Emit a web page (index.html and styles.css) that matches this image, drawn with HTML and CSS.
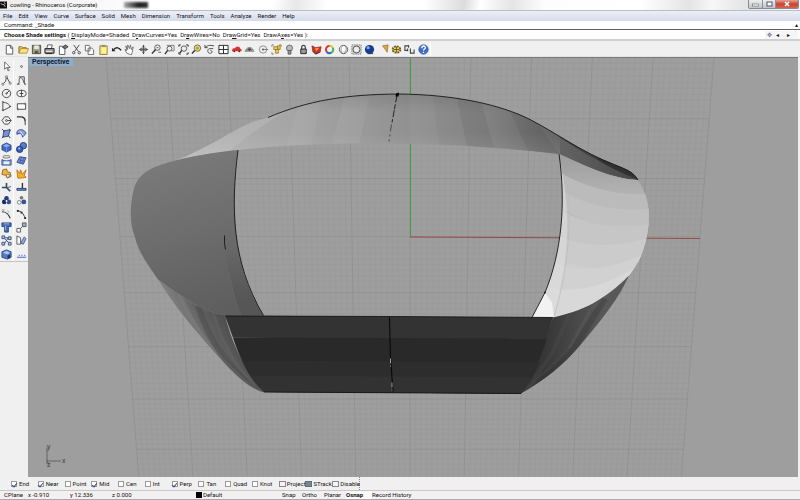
FILE: index.html
```html
<!DOCTYPE html>
<html lang="en">
<head>
<meta charset="utf-8">
<title>cowling - Rhinoceros (Corporate)</title>
<link rel="stylesheet" href="styles.css">
</head>
<body>
<header class="titlebar">
  <svg class="app-icon" viewBox="0 0 8 8"><rect width="8" height="8" fill="#111"/><path d="M1 2l2 2 1-1 2 3M5 1l1 2" stroke="#ddd" fill="none"/></svg>
  <span class="title">cowling - Rhinoceros (Corporate)</span>
  <span class="glass-shadow"></span>
  <div class="window-buttons">
    <button aria-label="Minimize"><svg viewBox="0 0 12 8"><rect x="3" y="4" width="6" height="2" fill="#fff" stroke="#666" stroke-width=".6"/></svg></button>
    <button aria-label="Restore"><svg viewBox="0 0 12 8"><rect x="4" y="2" width="5" height="4" fill="#fff" stroke="#556" stroke-width="1"/></svg></button>
    <button class="close" aria-label="Close"><svg viewBox="0 0 22 8"><path d="M9 2l4 4M13 2l-4 4" stroke="#fff" stroke-width="1.5"/></svg></button>
  </div>
</header>
<nav class="menubar">
  <a href="#">File</a><a href="#">Edit</a><a href="#">View</a><a href="#">Curve</a><a href="#">Surface</a><a href="#">Solid</a><a href="#">Mesh</a><a href="#">Dimension</a><a href="#">Transform</a><a href="#">Tools</a><a href="#">Analyze</a><a href="#">Render</a><a href="#">Help</a>
</nav>
<section class="history"><span>Command: _Shade</span><span class="spin">▴</span></section>
<section class="prompt">
  <p><b>Choose Shade settings</b> ( <a href="#"><u>D</u>isplayMode=<i>Shaded</i></a>&nbsp; <a href="#">D<u>r</u>awCurves=<i>Yes</i></a>&nbsp; <a href="#">Dr<u>a</u>wWires=<i>No</i></a>&nbsp; <a href="#">Dra<u>w</u>Grid=<i>Yes</i></a>&nbsp; <a href="#">DrawA<u>x</u>es=<i>Yes</i></a> ):</p>
  <div class="scroll"><span class="grip">✥</span><span>◂</span><span>▸</span></div>
</section>
<div class="toolbar">
  <div class="tools">
    <button aria-label="New"><svg viewBox="0 0 12 12"><path d="M2.5 1.500h5l2 2.500v7h-7zM7 1.500v3h2.500" fill="#fff" stroke="#555"/></svg></button>
    <button aria-label="Open"><svg viewBox="0 0 12 12"><path d="M1 10V3h3l1 1h4v2" fill="#f5d264" stroke="#8a6a20"/><path d="M1 10l2-5h8.500l-2 5z" fill="#ffe27a" stroke="#9a7420" stroke-width=".8"/></svg></button>
    <button aria-label="Save"><svg viewBox="0 0 12 12"><path d="M1.500 1.500h9v9h-9z" fill="#a8a47c" stroke="#444"/><path d="M3.500 1.500h5v4h-5z" fill="#e8e8e0"/><path d="M4 7.500h4v3H4z" fill="#555"/></svg></button>
    <button aria-label="Print"><svg viewBox="0 0 12 12"><path d="M4 1h5l-1 4H3z" fill="#fff" stroke="#555"/><path d="M1 5h10v5H1z" fill="#999" stroke="#222"/><path d="M2 8h7" stroke="#fff"/><path d="M2 10.500h7" stroke="#222"/></svg></button>
    <button aria-label="Properties"><svg viewBox="0 0 12 12"><path d="M1.500 2.500h6v9h-6z" fill="#fff" stroke="#555"/><path d="M5 4l3-3 3 2-3 2z" fill="#777" stroke="#333"/></svg></button>
    <button aria-label="Cut"><svg viewBox="0 0 12 12" fill="none" stroke="#444"><path d="M3 1l5 7M9 1L4 8"/><circle cx="3" cy="9.500" r="1.300"/><circle cx="9" cy="9.500" r="1.300"/></svg></button>
    <button aria-label="Copy"><svg viewBox="0 0 12 12" fill="#fff" stroke="#666"><path d="M1.500 1.500h4l1 1v5h-5zM4.500 4.500h4l2 2v5h-6z"/></svg></button>
    <button aria-label="Paste"><svg viewBox="0 0 12 12"><path d="M2 2h8v9.500H2z" fill="#f2df70" stroke="#91813a"/><path d="M4 1h4v2H4z" fill="#888"/><path d="M4 4h5v6H4z" fill="#fff490"/></svg></button>
    <button aria-label="Undo"><svg viewBox="0 0 12 12"><path d="M3 6c3-3 6-2 8 1" fill="none" stroke="#222" stroke-width="1.600"/><path d="M1 4v4h4z" fill="#222"/></svg></button>
    <button aria-label="Pan"><svg viewBox="0 0 12 12"><path d="M3 10L1 6l2 1-1-5 2 4 0-5 2 4 1-4 1 5 2-3-1 6-1 3z" fill="#fff" stroke="#555" stroke-width=".8"/></svg></button>
    <button aria-label="Rotate view"><svg viewBox="0 0 12 12"><path d="M6 1v10M1 6h10" stroke="#555"/><ellipse cx="6" cy="6" rx="4" ry="1.600" fill="none" stroke="#555"/><path d="M4.500 3L6 1l1.500 2M4.500 9L6 11l1.500-2" fill="#444"/></svg></button>
    <button aria-label="Zoom dynamic"><svg viewBox="0 0 12 12"><circle cx="7" cy="4" r="3" fill="#eee" stroke="#555"/><path d="M5 6l-4 4.500" stroke="#333" stroke-width="1.600"/><path d="M6 4h2M8 9h3" stroke="#555"/></svg></button>
    <button aria-label="Zoom window"><svg viewBox="0 0 12 12"><path d="M3 1.500h8v6H8" fill="none" stroke="#777"/><circle cx="6" cy="5" r="2.700" fill="#eee" stroke="#555"/><path d="M4 7l-3 4" stroke="#333" stroke-width="1.500"/></svg></button>
    <button aria-label="Zoom extents"><svg viewBox="0 0 12 12"><path d="M1 3V1h2M9 1h2v2M1 9v2h2M9 11h2V9" fill="none" stroke="#222"/><circle cx="6.500" cy="5" r="3" fill="#eee" stroke="#555"/><path d="M4 7l-2 3" stroke="#333" stroke-width="1.500"/></svg></button>
    <button aria-label="Zoom selected"><svg viewBox="0 0 12 12"><circle cx="7" cy="4.500" r="3.500" fill="#e7dc62" stroke="#666"/><circle cx="7" cy="4.500" r="1.500" fill="#a59b4a"/><path d="M4 7l-3 3.500" stroke="#333" stroke-width="1.600"/></svg></button>
    <button aria-label="Undo view"><svg viewBox="0 0 12 12" fill="none" stroke="#444"><path d="M1 1v3h3M1 4c4-4 7-2 10-2M10 5H6c-3 1-2 5 0 5 3 1 4-3 1-3"/></svg></button>
    <button aria-label="Four viewports"><svg viewBox="0 0 12 12"><path d="M1 1.500h10v9H1zM6 1.500v9M1 6h10" fill="#fff" stroke="#222"/></svg></button>
    <button aria-label="Set view"><svg viewBox="0 0 12 12"><path d="M1 7l1-2 2-.500 2-1.500h3l1 2 1.500 1v2H1z" fill="#d93030"/><circle cx="3.500" cy="8" r="1" fill="#333"/><circle cx="9" cy="8" r="1" fill="#333"/></svg></button>
    <button aria-label="Set plane"><svg viewBox="0 0 12 12"><path d="M1 8l3-4h4l3 4zM3 8l3-4M6 4l3 4M2 6h8" fill="#bbb" stroke="#777" stroke-width=".8"/><circle cx="6" cy="6" r="1.500" fill="#444"/></svg></button>
    <button aria-label="Circle snap"><svg viewBox="0 0 12 12"><circle cx="5.500" cy="6" r="4" fill="none" stroke="#888"/><circle cx="5.500" cy="6" r="1" fill="#333"/><path d="M5.500 6H11" stroke="#777"/></svg></button>
    <button aria-label="Select"><svg viewBox="0 0 12 12"><path d="M3 1H1v2M9 1h2v2M1 9v2h2" fill="none" stroke="#777"/><path d="M3 3h4v3H3zM7 2h3v4H8zM5 6h3v4H5z" fill="#f4d650" stroke="#9a812c"/></svg></button>
    <button aria-label="Hide"><svg viewBox="0 0 12 12"><circle cx="6" cy="4.500" r="3.300" fill="#bbb" stroke="#666"/><path d="M4.500 7h3v4h-3z" fill="#999" stroke="#555"/></svg></button>
    <button aria-label="Lock"><svg viewBox="0 0 12 12"><path d="M4 6V3.500a2 2 0 014 0V6" fill="none" stroke="#444" stroke-width="1.300"/><path d="M3 5.500h6v5H3z" fill="#999" stroke="#222"/></svg></button>
    <button aria-label="Layers"><svg viewBox="0 0 12 12"><path d="M1 2l4 2 6-1-1 6-5 2-3-3z" fill="#d72e20" stroke="#7e211b" stroke-width=".7"/><path d="M4 5l5-1-3 4z" fill="#f1a23f"/><path d="M2 8l3 3 4-2" stroke="#253b68" fill="none"/></svg></button>
    <button aria-label="Color"><svg viewBox="0 0 12 12" fill="none" stroke-width="2.200"><path d="M6 2a4 4 0 013.500 2" stroke="#e8c42c"/><path d="M9.500 4a4 4 0 01-1.500 5.500" stroke="#4ab34b"/><path d="M8 9.500a4 4 0 01-5-1" stroke="#2868ce"/><path d="M3 8.500A4 4 0 016 2" stroke="#d33939"/></svg></button>
    <button aria-label="Shade"><svg viewBox="0 0 12 12"><circle cx="6" cy="6" r="4.500" fill="#eee" stroke="#555"/><circle cx="5" cy="5" r="2.500" fill="#fff"/><path d="M4 10c-1-4-1-6 1-8M6 10c3-2 4-5 2-8" fill="none" stroke="#888" stroke-width=".8"/></svg></button>
    <button aria-label="Shade selected"><svg viewBox="0 0 12 12"><path d="M1 1h10v10H1z" fill="#ddd" stroke="#555" stroke-dasharray="1 1"/><circle cx="6" cy="6" r="3.800" fill="#eee" stroke="#444"/></svg></button>
    <button aria-label="Render"><svg viewBox="0 0 12 12"><circle cx="6" cy="6" r="5" fill="#163d92"/><circle cx="4.500" cy="4" r="1.800" fill="#77a9ed"/><path d="M4 10.500h6" stroke="#334"/></svg></button>
    <button aria-label="Spotlight"><svg viewBox="0 0 12 12"><path d="M5 2l6-1-1 8-2-3z" fill="#e2a640" stroke="#86652b" stroke-width=".7"/></svg></button>
    <button aria-label="Options"><svg viewBox="0 0 12 12"><ellipse cx="6" cy="6" rx="4.200" ry="3.500" fill="#eed65a" stroke="#665320" stroke-width="2" stroke-dasharray="2 1"/><path d="M3 6h6M6 3v6" stroke="#665320"/></svg></button>
    <button aria-label="Dimension"><svg viewBox="0 0 12 12"><path d="M5 2H1v5h3M5 1v3M4 5v3M7 5v5h4V6" fill="none" stroke="#444" stroke-width="1.200"/></svg></button>
    <button aria-label="Help"><svg viewBox="0 0 12 12"><circle cx="6" cy="6" r="5.200" fill="#426bc5" stroke="#27479b" stroke-width=".6"/><path d="M4 4.500c0-3 4-3 4-.500 0 1.500-2 1.500-2 3M6 8.500v1.300" fill="none" stroke="#fff" stroke-width="1.400"/></svg></button>
  </div>
</div>
<main class="workspace">
  <aside class="sidebar">
    <div class="palette">
      <button aria-label="Select"><svg viewBox="0 0 12 12"><path d="M4 1v8l2-2 2 4 1-1-2-3h3z" fill="#fff" stroke="#444" stroke-width=".8"/></svg></button>
      <button aria-label="Point"><svg viewBox="0 0 12 12"><circle cx="6" cy="6" r="1" fill="#fff" stroke="#555"/></svg></button>
      <button aria-label="Polyline"><svg viewBox="0 0 12 12" fill="#fff" stroke="#444"><path d="M2 10l3-3 1-5 4 7" fill="none"/><path d="M1 9h2v2H1zM5 1h2v2H5zM9 8h2v2H9z" stroke-width=".6"/></svg></button>
      <button aria-label="Curve"><svg viewBox="0 0 12 12" fill="none" stroke="#444"><path d="M2 10c3-1 0-7 3-7s3 6 5 7"/><path d="M3 2h6v7M1 10h3M9 10h2"/></svg></button>
      <button aria-label="Circle"><svg viewBox="0 0 12 12" fill="none" stroke="#444"><circle cx="6" cy="6" r="4.500"/><circle cx="6" cy="6" r=".7"/><path d="M6 6l3-3"/></svg></button>
      <button aria-label="Ellipse"><svg viewBox="0 0 12 12" fill="none" stroke="#444"><ellipse cx="6" cy="6" rx="5" ry="3.500"/><path d="M6 2v7M4 6h4"/></svg></button>
      <button aria-label="Arc"><svg viewBox="0 0 12 12" fill="none" stroke="#444"><path d="M2 1.500c5 0 8 3 8 5L2 10.500zM1 1h2M9 6h2M1 10h2"/></svg></button>
      <button aria-label="Rectangle"><svg viewBox="0 0 12 12"><path d="M1.500 3h9v6h-9z" fill="#fff" stroke="#444"/><path d="M1 8h2v2H1zM9 2h2v2H9z" fill="#777"/></svg></button>
      <button aria-label="Polygon"><svg viewBox="0 0 12 12" fill="none" stroke="#444"><path d="M4 2h4l3 4-3 4H4L1 6z"/><circle cx="6" cy="6" r="1"/><path d="M7 6h4"/></svg></button>
      <button aria-label="Fillet"><svg viewBox="0 0 12 12" fill="none" stroke="#333"><path d="M1 2h4M5 2c4 0 5 2 5 5" stroke-width="1.500"/><path d="M10 7v4"/></svg></button>
      <button aria-label="Surface"><svg viewBox="0 0 12 12"><path d="M3 3l7-1-2 7-6 1z" fill="#7891ce" stroke="#334d8c"/><path d="M1 1l3 3M9 1l1 2M1 11l2-2M8 8l2 3" stroke="#334"/></svg></button>
      <button aria-label="Sweep"><svg viewBox="0 0 12 12"><path d="M1 4c3-4 9-2 10 2L7 10c0-4-3-5-6-3z" fill="#8ba1d7" stroke="#334d8c"/><path d="M4 3l4 5" stroke="#eef"/></svg></button>
      <button aria-label="Box"><svg viewBox="0 0 12 12"><path d="M1 3.500L6 1l5 2.500v5L6 11l-5-2.500z" fill="#3f66c4" stroke="#203a7d" stroke-width=".8"/><path d="M2 4l4-2 4 2-4 2z" fill="#8eaae8"/><path d="M6 6v5" stroke="#7895d4"/></svg></button>
      <button aria-label="Union"><svg viewBox="0 0 12 12"><circle cx="8" cy="4" r="3.500" fill="#5c7bca" stroke="#213b7c"/><circle cx="4" cy="8" r="3.500" fill="#395eb4" stroke="#213b7c"/><circle cx="3.500" cy="7" r="1" fill="#c5d6ff"/></svg></button>
      <button aria-label="Project"><svg viewBox="0 0 12 12"><ellipse cx="6" cy="2" rx="4" ry="1.300" fill="#fff" stroke="#666"/><path d="M1 5c3 2 7 2 10 0v6H1z" fill="#8da4da" stroke="#344f91"/><path d="M3 7h6v3H3z" fill="#e9f0ff"/></svg></button>
      <button aria-label="Mesh"><svg viewBox="0 0 12 12"><path d="M1 8l3-6 7 1-3 7z" fill="#7893d7" stroke="#334d8c"/><path d="M3 5l6 2M6 2L4 9M9 3L6 9" stroke="#334d8c" stroke-width=".7"/></svg></button>
      <button aria-label="Join"><svg viewBox="0 0 12 12"><path d="M2 2l4-1 1 3 3 1 1 4-4 2-2-3-4-1z" fill="#f1b33d" stroke="#98671c"/><path d="M6 7h3v3H6z" fill="#fff2c4" stroke="#555" stroke-width=".6"/></svg></button>
      <button aria-label="Explode"><svg viewBox="0 0 12 12"><path d="M1 2l3 4 1-4 2 5 4-5-2 6 2 2-5 1H2z" fill="#f4b31f" stroke="#bd711b"/></svg></button>
      <button aria-label="Trim"><svg viewBox="0 0 12 12" fill="none"><path d="M6 1v6M1 6h5l4 4" stroke="#334b73" stroke-width="1.800"/><path d="M7 6l4-1" stroke="#555"/></svg></button>
      <button aria-label="Split"><svg viewBox="0 0 12 12"><path d="M7 1v6" stroke="#333" stroke-width="1.500"/><path d="M1 7h10v2H1z" fill="#7891ce" stroke="#233f70"/></svg></button>
      <button aria-label="Group"><svg viewBox="0 0 12 12"><circle cx="6" cy="3.500" r="2.500" fill="#283b72"/><circle cx="3.500" cy="7.500" r="2.500" fill="#192b5c"/><circle cx="8.500" cy="7.500" r="2.500" fill="#344d91"/><circle cx="6" cy="6.500" r="1" fill="#fff"/></svg></button>
      <button aria-label="Ungroup"><svg viewBox="0 0 12 12"><circle cx="6" cy="3" r="2" fill="#777"/><circle cx="3.500" cy="8" r="2" fill="#fff" stroke="#777"/><circle cx="8.500" cy="7.500" r="2.700" fill="#3652a0"/></svg></button>
      <button aria-label="Edit curve"><svg viewBox="0 0 12 12"><path d="M1 3c5 0 7 2 9 7" fill="none" stroke="#333" stroke-width="1.300"/><path d="M1 1h3M7 2l2 2" stroke="#888"/></svg></button>
      <button aria-label="Edit points"><svg viewBox="0 0 12 12"><path d="M1 2c5 0 7 3 9 8" fill="none" stroke="#333"/><path d="M1 1h2v2H1zM5 3h2v2H5zM9 9h2v2H9z" fill="#222"/></svg></button>
      <button aria-label="Text"><svg viewBox="0 0 12 12"><path d="M1 1h10v4H8v6H4V5H1z" fill="#426bb7" stroke="#294777"/><path d="M3 2h6M5 4v5" stroke="#9db9ec"/></svg></button>
      <button aria-label="Move"><svg viewBox="0 0 12 12" stroke="#555"><path d="M3 9l6-6" stroke-dasharray="2 1"/><path d="M1 7h4v4H1z" fill="#fff"/><path d="M7 1h4v4H7z" fill="#9baed8"/></svg></button>
      <button aria-label="Array"><svg viewBox="0 0 12 12" stroke="#38507c" fill="#b9c7e2"><path d="M4 4l4 4M8 3L4 9M4 3h4"/><path d="M1 1h3v3H1zM8 2h3v3H8zM1 8h3v3H1zM8 8h3v3H8z"/></svg></button>
      <button aria-label="Orient"><svg viewBox="0 0 12 12"><path d="M1 1l4 2v7H1z" fill="#fff" stroke="#555"/><path d="M5 9l4-7 2 2-3 6z" fill="#91a8d8" stroke="#476090"/></svg></button>
      <button aria-label="Solid tools"><svg viewBox="0 0 12 12"><path d="M1 3l5-2 5 2v6l-4 2-6-2z" fill="#547bc8" stroke="#28498b"/><path d="M2 4l4-2 4 2-3 2z" fill="#abc6f5"/><path d="M7 7l3-1v4H7z" fill="#26355d"/></svg></button>
      <button aria-label="Flatten"><svg viewBox="0 0 12 12"><path d="M1 9l2-3h7l1 3z" fill="#e4edff"/><path d="M1 9h10M3 7h1M6 7h1M9 7h1" stroke="#476dac" stroke-width="1.300"/></svg></button>
    </div>
  </aside>
  <section class="viewport">
    <h1 class="view-name">Perspective</h1>
    <svg class="scene" viewBox="28 57 770 420" preserveAspectRatio="xMidYMid slice">
      <defs>
        <linearGradient id="gTop" x1="0" x2="1" y1="0" y2="0"><stop offset="0" stop-color="#b4b4b4"/><stop offset=".28" stop-color="#a4a4a4"/><stop offset=".5" stop-color="#929292"/><stop offset=".68" stop-color="#828282"/><stop offset=".84" stop-color="#626262"/><stop offset="1" stop-color="#484848"/></linearGradient>
        <linearGradient id="gLow" x1="0" x2="0" y1="0" y2="1"><stop offset="0" stop-color="#fff" stop-opacity="0"/><stop offset="1" stop-color="#fff" stop-opacity=".13"/></linearGradient>
        <linearGradient id="gRim" x1="0" x2="0" y1="0" y2="1"><stop offset="0" stop-color="#000" stop-opacity=".12"/><stop offset="1" stop-color="#000" stop-opacity="0"/></linearGradient>
        <linearGradient id="gLeft" x1=".3" x2=".55" y1="0" y2="1"><stop offset="0" stop-color="#7b7b7b"/><stop offset=".5" stop-color="#6d6d6d"/><stop offset="1" stop-color="#5e5e5e"/></linearGradient>
        <linearGradient id="gFold" gradientUnits="userSpaceOnUse" x1="0" x2="0" y1="248" y2="305"><stop offset="0" stop-color="#505050" stop-opacity="0"/><stop offset="1" stop-color="#505050" stop-opacity=".6"/></linearGradient>
        <linearGradient id="gLeftLow" gradientUnits="userSpaceOnUse" x1="190" y1="345" x2="232" y2="322"><stop offset="0" stop-color="#878787"/><stop offset=".5" stop-color="#616161"/><stop offset="1" stop-color="#4a4a4a"/></linearGradient>
        <linearGradient id="gRight" x1="0" x2="0" y1="0" y2="1"><stop offset="0" stop-color="#9c9c9c"/><stop offset=".3" stop-color="#b8b8b8"/><stop offset=".6" stop-color="#c9c9c9"/><stop offset="1" stop-color="#dedede"/></linearGradient>
        <linearGradient id="gRightLow" gradientUnits="userSpaceOnUse" x1="545" y1="335" x2="600" y2="340"><stop offset="0" stop-color="#363636"/><stop offset="1" stop-color="#585858"/></linearGradient>
        <clipPath id="cTop"><path d="M168 163C190 155 211 144 235 130C247 123 256 120 268 117C308 100 345 94 398 93.500C455 94 500 104 530 119C555 132 574 146 600 158C622 168 632 169 638 179.500C610 178 583 164 559 153.500C510 148 460 144 410 143.500C350 142.500 300 143 238 149.500C212 152 190 156 168 163Z"/></clipPath>
        <clipPath id="cRight"><path d="M559 153.500C583 164 610 178 638 179.500C651 199 652 222 643 250C640 260 634 268 629 275C603 301 583 310 553 317H532L545 292C562 251 566 202 559 153.500Z"/></clipPath>
        <clipPath id="cLeftLow"><path d="M158 279C180 295 200 310 225 315C232 345 247 373 264 392C244 386 225 364 200 335C183 315 174 304 158 279Z"/></clipPath>
        <clipPath id="cRightLow"><path d="M553 317C583 310 603 301 629 275C619 298 601 320 580 345C562 366 545 379 521 393C533 370 543 345 553 317Z"/></clipPath>
      </defs>
      <rect x="28" y="57" width="770" height="420" fill="#9e9e9e"/>
      <path id="grid-minor" class="grid-minor"/>
      <path id="grid-major" class="grid-major"/>
      <path d="M410.500 57V236.500" stroke="#3f9d43"/>
      <path d="M410 236.500L700 238" stroke="#934a48" stroke-width="1.100"/>

      <path d="M168 163C190 155 211 144 235 130C247 123 256 120 268 117C308 100 345 94 398 93.500C455 94 500 104 530 119C555 132 574 146 600 158C622 168 632 169 638 179.500C610 178 583 164 559 153.500C510 148 460 144 410 143.500C350 142.500 300 143 238 149.500C212 152 190 156 168 163Z" fill="url(#gTop)"/>
      <g clip-path="url(#cTop)">
        <path d="M180 160C230 130 260 116 275 112L292 107C265 122 235 145 225 155Z" fill="#bcbcbc" opacity=".45"/>
        <path d="M300 100L285 150H310L322 98ZM345 94L330 150H358L370 93Z" fill="#fff" opacity=".05"/>
        <path d="M410 90V150H440L432 90Z" fill="#fff" opacity=".04"/>
        <path d="M455 90L468 150H495L478 90ZM505 100L530 155H560L525 105Z" fill="#000" opacity=".06"/>
        <path d="M280 90H540V112H280Z" fill="url(#gRim)"/>
        <path d="M160 132H560V160H160Z" fill="url(#gLow)"/>
        <path d="M540 122C575 150 605 164 640 181L637 170L600 156Z" fill="#303030" opacity=".55"/>
        <path d="M596 158C610 168 622 172 640 179L630 170L600 158Z" fill="#292929" opacity=".6"/>
      </g>

      <path d="M238 149.500C212 152 190 156 168 162C147 168 138 175 134 188C130 204 129 222 135 237C139 253 148 264 158 279C180 295 200 310 225 315H263.500C244 285 235 247 234.500 205C234.500 180 236 165 238 149.500Z" fill="url(#gLeft)"/>
      <path d="M225 248C228 276 233 296 240 315H263.500C248 289 240 267 237 242Z" fill="url(#gFold)"/>
      <path d="M229 272C233 292 236 303 241 315" fill="none" stroke="#747474" opacity=".5"/>
      <path d="M158 279C180 295 200 310 225 315C232 345 247 373 264 392C244 386 225 364 200 335C183 315 174 304 158 279Z" fill="url(#gLeftLow)"/>
      <g clip-path="url(#cLeftLow)" fill="none">
        <path d="M178 291C196 335 225 366 255 389" stroke="#858585" stroke-width="4" opacity=".4"/>
        <path d="M198 305C210 343 230 370 258 390" stroke="#464646" stroke-width="6" opacity=".4"/>
        <path d="M213 311C222 345 237 368 262 392" stroke="#666" stroke-width="3" opacity=".4"/>
      </g>

      <path d="M559 153.500C583 164 610 178 638 179.500C651 199 652 222 643 250C640 260 634 268 629 275C603 301 583 310 553 317H532L545 292C562 251 566 202 559 153.500Z" fill="url(#gRight)"/>
      <g clip-path="url(#cRight)">
        <path d="M560 172C588 188 620 196 652 193V215C620 212 585 212 562 190Z" fill="#bbb"/>
        <path d="M562 190C588 207 620 211 652 208V227C620 229 588 227 562 207Z" fill="#c1c1c1"/>
        <path d="M562 210C588 226 620 229 652 223V242C620 249 586 247 561 231Z" fill="#c6c6c6"/>
        <path d="M561 236C588 248 620 246 652 236V258C620 270 582 272 556 255Z" fill="#cbcbcb"/>
        <path d="M556 263C588 275 620 265 652 250V280L540 320Z" fill="#d1d1d1"/>
        <path d="M551 288C585 293 612 282 640 264V290L540 322Z" fill="#d8d8d8"/>
        <path d="M561 165C571 212 569 260 553 317H530L546 290C561 252 566 207 559 155Z" fill="#dedede" opacity=".6"/>
        <path d="M545 292L552 302L554 317H530Z" fill="#f2f2f2"/>
        <path d="M568 180C571 231 568 270 554 316" fill="none" stroke="#bcbcbc" opacity=".7"/>
      </g>
      <path d="M553 317C583 310 603 301 629 275C619 298 601 320 580 345C562 366 545 379 521 393C533 370 543 345 553 317Z" fill="url(#gRightLow)"/>
      <g clip-path="url(#cRightLow)" fill="none">
        <path d="M628 276L590 310L568 350L523 392" stroke="#686868" stroke-width="3" opacity=".25"/>
        <path d="M605 298L574 348L525 392" stroke="#333" stroke-width="6" opacity=".3"/>
        <path d="M570 312L552 353L527 389" stroke="#555" stroke-width="4" opacity=".25"/>
      </g>

      <path d="M225 315L553 317L545 341L233 337Z" fill="#333"/>
      <path d="M233 337L547 338C541 357 533 373 521 393L264 391.500C248 376 239 356 233 337Z" fill="#292929"/>
      <path d="M242 360L540 362C534 374 529 382 521 393L264 391.500C254 382 248 373 242 360Z" fill="#2d2d2d"/>
      <path d="M251 375L533 377L521 393L264 391.500Z" fill="#323232"/>

      <g fill="none" stroke="#161616" stroke-width=".9">
        <path d="M268 117C308 100 345 94 398 93.500C455 94 500 104 530 119C555 132 574 146 600 158C622 168 632 169 638 179.500"/>
        <path d="M238 149.500C231 206 231 260 263.500 315"/>
        <path d="M559 153.500C566 202 562 251 545 292L532 317"/>
        <path d="M225 315.500L390 316L553 317M264 391.500L521 393"/>
        <path d="M397 95L392 122" stroke-dasharray="7 2 5 1"/>
        <path d="M391.500 124L389 141" stroke="#444" stroke-dasharray="7 3 2 3"/>
        <path d="M224.500 235V243L225.500 249"/>
        <path d="M389.500 317L390.500 357L393 391" stroke="#080808" stroke-width="1.100"/>
        <path d="M390.500 358V366M392 382V390" stroke="#aaa" stroke-dasharray="5 2"/>
      </g>
      <path d="M396 93L399 92L398.500 96L395.500 96Z" fill="#000"/>
      <circle cx="545" cy="292" r="1" fill="#222"/>
      <path d="M47 464V447M47 460.500H61M47 460L49 464" fill="none" stroke="#555" stroke-width=".8"/>
      <g class="axis-labels"><text x="47" y="448">y</text><text x="62" y="462">x</text><text x="47" y="466">z</text></g>
    </svg>
  </section>
</main>
<section class="osnap">
  <label><input type="checkbox" checked>End</label>
  <label><input type="checkbox" checked>Near</label>
  <label><input type="checkbox">Point</label>
  <label><input type="checkbox" checked>Mid</label>
  <label><input type="checkbox">Cen</label>
  <label><input type="checkbox">Int</label>
  <label><input type="checkbox" checked>Perp</label>
  <label><input type="checkbox">Tan</label>
  <label><input type="checkbox">Quad</label>
  <label><input type="checkbox">Knot</label>
  <label class="tight"><input class="push" type="checkbox">Project</label>
  <label class="tight"><input class="push" type="checkbox" checked>STrack</label>
  <label class="tight"><input class="push" type="checkbox">Disable</label>
</section>
<footer class="status">
  <span>CPlane</span><span>x -0.910</span><span>y 12.336</span><span>z 0.000</span>
  <span class="layer"><i class="swatch"></i>Default</span>
  <button>Snap</button><button>Ortho</button><button>Planar</button><button class="on">Osnap</button><button>Record History</button>
</footer>
<script src="grid.js"></script>
</body>
</html>
```
FILE: styles.css
```css
* { box-sizing: border-box; }
body {
  margin: 0;
  height: 100vh;
  display: flex;
  flex-direction: column;
  overflow: hidden;
  background: #f0f0f0;
  color: #111;
  font: 6px/8px Roboto, "Liberation Sans", sans-serif;
}
button {
  margin: 0;
  padding: 0;
  border: 0;
  background: none;
  color: inherit;
  font: inherit;
}
a { color: inherit; text-decoration: none; }
svg { display: block; }

.titlebar {
  flex: 0 0 11px;
  display: flex;
  align-items: center;
  gap: 3px;
  padding-right: 1px;
  border-bottom: 1px solid #bcbcc4;
  background: linear-gradient(100deg, #ececec 0, #f8f8f8 12%, #fff 20%, #fff 34%, #e8e8e8 37%, #fff 41%, #fff 53%, #dcdcdc 58%, #fff 60%, #e4e4e4 64%, #fdfdfd 68%, #fff 80%, #e4e4e4 86%, #f7f7f7 89%, #e4e4e4 93%, #fafafa 100%);
}
.app-icon { width: 7px; height: 8px; }
.glass-shadow {
  width: 24px;
  height: 6px;
  margin-left: 24px;
  background: linear-gradient(90deg, #aaa, #222 60%, #333);
  filter: blur(1px);
}
.window-buttons {
  display: flex;
  align-self: flex-start;
  margin-left: auto;
  border: 1px solid #858b94;
  border-top: 0;
  border-radius: 0 0 2px 2px;
  overflow: hidden;
}
.window-buttons button { width: 13px; height: 8px; background: linear-gradient(#eee, #bfc3ca); }
.window-buttons button + button { border-left: 1px solid #8d929b; }
.window-buttons svg { width: 100%; height: 100%; }
.window-buttons .close { width: 23px; background: linear-gradient(#e4a294, #c74432 50%, #d6634a); }

.menubar {
  flex: 0 0 10px;
  display: flex;
  align-items: center;
  gap: 6px;
  padding: 0 3px;
  background: linear-gradient(#eceff7, #d5dbea);
}
.history, .prompt {
  display: flex;
  align-items: center;
  justify-content: space-between;
  padding: 0 2px 0 4px;
  background: #fff;
}
.history { flex: 0 0 9px; border-bottom: 1px solid #5f635f; }
.prompt { flex: 0 0 9px; }
.prompt p { margin: 0; white-space: nowrap; }
.prompt i { font-style: normal; }
.scroll { display: flex; gap: 8px; padding: 0 8px 0 2px; background: #f5f5f5; }
.grip { margin-right: -4px; color: #668; }

.toolbar {
  flex: 0 0 18px;
  padding: 1px 0 0 3px;
  border-top: 2px solid #d0d0d0;
  border-bottom: 1px solid #e4e4e4;
  background: #f0f0f0;
}
.tools {
  width: 428px;
  height: 100%;
  display: grid;
  grid-template-columns: repeat(32, 1fr);
  align-items: center;
  border-right: 1px solid #fff;
}
.tools button, .palette button { display: grid; place-items: center; }
.tools svg, .palette svg { width: 11px; height: 11px; }

.workspace { flex: 1; min-height: 0; display: flex; }
.sidebar {
  flex: 0 0 28px;
  padding: 3px 0;
  background: #f0f0f0;
}
.palette {
  height: 202px;
  display: grid;
  grid-template-columns: 1fr 1fr;
  grid-template-rows: repeat(15, 1fr);
  border-bottom: 1px solid #c0c4cc;
}
.palette button:nth-child(odd) { border-right: 1px solid #fff; }
.viewport {
  position: relative;
  flex: 1;
  min-width: 0;
  margin-right: 2px;
  background: #9e9e9e;
}
.scene { width: 100%; height: 100%; border-top: 1px solid #7a7a7a; }
.view-name {
  position: absolute;
  top: 1px;
  left: 1px;
  margin: 0;
  padding: 0 4px 0 3px;
  background: #8faecb;
  color: #102030;
  font: bold 7px/8px Roboto, "Liberation Sans", sans-serif;
}
.grid-minor { fill: none; stroke: #969696; stroke-width: 1; opacity: .4; }
.grid-major { fill: none; stroke: #8d8d8d; stroke-width: 1; opacity: .65; }
.axis-labels { fill: #444; font: 7px Roboto, "Liberation Sans", sans-serif; }

.osnap {
  flex: 0 0 13px;
  width: 360px;
  display: grid;
  grid-template-columns: repeat(13, 1fr);
  align-items: center;
  padding: 1px 0 0 11px;
  border-right: 1px dotted #888;
}
.osnap label { display: flex; align-items: center; gap: 2px; width: 0; white-space: nowrap; }
.osnap .tight { gap: 1px; }
.osnap input {
  flex: none;
  display: grid;
  place-items: center;
  appearance: none;
  width: 6px;
  height: 6px;
  margin: 0;
  border: 1px solid #9a9a9a;
  background: #fff;
}
.osnap input:checked::before {
  content: "";
  width: 2px;
  height: 4px;
  border: solid #33508f;
  border-width: 0 1px 1px 0;
  transform: rotate(40deg);
}
.osnap .push { width: 7px; background: #f4f4f4; border-color: #888; }
.osnap .push:checked { background: #6f8796; border-color: #5d7280; }
.osnap .push:checked::before { content: none; }

.status {
  flex: 0 0 10px;
  display: grid;
  grid-template-columns: 24px 42px 42px 84px 86px 20px 22px 22px 26px 1fr;
  align-items: center;
  padding-left: 4px;
  border-top: 1px solid #c8c8c8;
  border-bottom: 1px solid #aaa;
  background: #f2f0f0;
}
.status button { text-align: left; white-space: nowrap; }
.status .on { font-weight: bold; background: #fafafa; }
.layer { display: flex; align-items: center; gap: 1px; }
.swatch { width: 6px; height: 6px; background: #000; }
```
FILE: grid.js
```js
// Construction plane grid: 10 minor cells per major cell, seen in perspective.
const rowY = k => 236 + 57 * k - 0.95 * k * k;
const colX = (u, y) => 410 + (u / 5) * (304 - 0.078 * (y - 57));

function gridPath(step, skip) {
  let d = "";
  for (let i = -50; i <= 50; i += step) {
    if (skip && i % skip === 0) continue;
    const u = i / 10;
    d += `M${colX(u, 57)} 57L${colX(u, 477)} 477`;
  }
  for (let i = -30; i <= 50; i += step) {
    if (skip && i % skip === 0) continue;
    const y = rowY(i / 10);
    if (y < 57 || y > 477) continue;
    d += `M${colX(-5, y)} ${y}L${colX(5, y)} ${y}`;
  }
  return d;
}

document.getElementById("grid-minor").setAttribute("d", gridPath(1, 10));
document.getElementById("grid-major").setAttribute("d", gridPath(10, 0));
```
